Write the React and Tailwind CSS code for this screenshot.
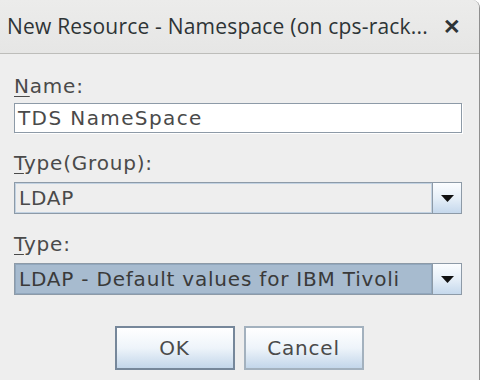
export default function App() {
  const javaFont = { fontFamily: '"DejaVu Sans", sans-serif' };

  return (
    <div className="w-[480px] h-[380px] overflow-hidden bg-[#eeeeee] flex flex-col border-r border-[#8f8f8f] rounded-tr-[8px]">
      {/* Title bar */}
      <div
        className="h-[54px] shrink-0 flex items-center justify-between pl-[7px] pr-[18px] bg-gradient-to-b from-[#ececeb] to-[#e6e6e5] border-b border-[#bdbdba] text-[#2e3436]"
        style={{ fontFamily: '"Open Sans", "Noto Sans", sans-serif' }}
      >
        <span className="text-[21px] tracking-[0.2px] whitespace-nowrap">New Resource - Namespace (on cps-rack...</span>
        <span className="text-[21px] font-bold leading-none">✕</span>
      </div>

      {/* Form */}
      <div className="flex flex-col pl-[14px] pr-[17px] pt-[20px] text-[#4a4a4a]" style={javaFont}>
        <div className="h-[24px] leading-[24px] text-[20px] tracking-[0.8px]">
          <span className="underline underline-offset-[3px] decoration-1">N</span>ame:
        </div>
        <div className="mt-[5px] h-[30px] border border-[#8d9aa7] bg-white shadow-[1px_1px_0_#ffffff] flex items-center pl-[3px]">
          <span className="text-[20px] leading-none tracking-[1.4px]">TDS NameSpace</span>
        </div>

        <div className="mt-[18px] h-[24px] leading-[24px] text-[20px] tracking-[0.8px]">
          <span className="underline underline-offset-[3px] decoration-1">T</span>ype(Group):
        </div>
        <div className="mt-[7px] h-[32px] flex border border-[#8d9aa7] bg-[#eeeeee]">
          <div className="flex-1 flex items-center pl-[3px] border border-[#c2d2e2]">
            <span className="text-[20px] leading-none tracking-[0.8px]">LDAP</span>
          </div>
          <ArrowButton />
        </div>

        <div className="mt-[18px] h-[24px] leading-[24px] text-[20px] tracking-[0.8px]">
          <span className="underline underline-offset-[3px] decoration-1">T</span>ype:
        </div>
        <div className="mt-[7px] h-[32px] flex border border-[#8d9aa7] bg-[#eeeeee]">
          <div className="flex-1 flex items-center pl-[3px] bg-[#a7bbcf] border border-[#91a7bd]">
            <span className="text-[20px] leading-none tracking-[0.8px] whitespace-nowrap text-[#3a3a3a]">LDAP - Default values for IBM Tivoli</span>
          </div>
          <ArrowButton />
        </div>

        {/* Buttons */}
        <div className="mt-[31px] flex justify-center gap-[9px] pl-[2px]">
          <button className="w-[120px] h-[44px] border-2 border-[#76879a] bg-gradient-to-b from-white via-[#eef4fa] to-[#c3d6ea] text-[20px] tracking-[0.8px] text-[#4a4a4a]">
            OK
          </button>
          <button className="w-[120px] h-[44px] border-2 border-[#a3b1be] bg-gradient-to-b from-white via-[#eef4fa] to-[#c3d6ea] text-[20px] tracking-[0.8px] text-[#4a4a4a]">
            Cancel
          </button>
        </div>
      </div>
    </div>
  );
}

function ArrowButton() {
  return (
    <div className="w-[29px] shrink-0 flex items-center justify-center border-l border-[#8d9aa7] bg-gradient-to-b from-[#fbfdff] via-[#e6eff8] to-[#c5d8ec]">
      <svg width="13" height="7" viewBox="0 0 13 7">
        <path d="M0 0 H13 L6.5 7 Z" fill="#111" />
      </svg>
    </div>
  );
}
